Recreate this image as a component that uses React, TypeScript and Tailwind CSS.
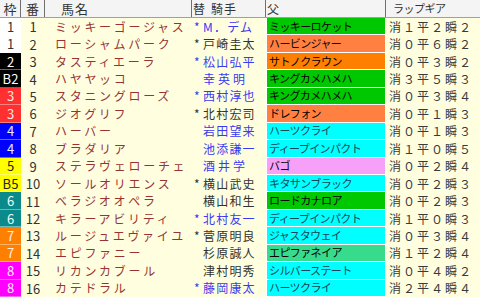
import React from 'react'

const WAKU: Record<string, [string, string]> = {
  '1': ['bg-white', 'text-[#333]'],
  '2': ['bg-black', 'text-white'],
  '3': ['bg-[#ff3030]', 'text-[#ffe8e8]'],
  '4': ['bg-[#0000ff]', 'text-[#e8e8ff]'],
  '5': ['bg-[#ffff00]', 'text-[#222]'],
  '6': ['bg-[#0a8a8a]', 'text-[#e8ffff]'],
  '7': ['bg-[#ff8000]', 'text-[#fff0e0]'],
  '8': ['bg-[#ff00ff]', 'text-[#ffe8ff]'],
}

const GREEN = 'bg-[#00c800]'
const SALMON = 'bg-[#ff8040]'
const ORANGE = 'bg-[#ff8000]'
const CYAN = 'bg-[#00ffff] text-[#0f4656]'
const PINK = 'bg-[#f7a0f7]'
const SEA = 'bg-[#36dc8c]'

const rows: [string, number, string, boolean, string, boolean, string, string, string][] = [
  ['1', 1, 'ミッキーゴージャス', true, 'M．デム', true, 'ミッキーロケット', GREEN, '消１平２瞬２'],
  ['1', 2, 'ローシャムパーク', true, '戸崎圭太', false, 'ハービンジャー', SALMON, '消０平６瞬２'],
  ['2', 3, 'タスティエーラ', true, '松山弘平', true, 'サトノクラウン', ORANGE, '消０平３瞬２'],
  ['B2', 4, 'ハヤヤッコ', false, '幸英明', true, 'キングカメハメハ', GREEN, '消３平５瞬３'],
  ['3', 5, 'スタニングローズ', true, '西村淳也', true, 'キングカメハメハ', GREEN, '消０平３瞬４'],
  ['3', 6, 'ジオグリフ', true, '北村宏司', false, 'ドレフォン', SALMON, '消０平１瞬３'],
  ['4', 7, 'ハーバー', false, '岩田望来', true, 'ハーツクライ', CYAN, '消０平１瞬３'],
  ['4', 8, 'ブラダリア', false, '池添謙一', true, 'ディープインパクト', CYAN, '消１平０瞬５'],
  ['5', 9, 'ステラヴェローチェ', false, '酒井学', true, 'バゴ', PINK, '消０平２瞬４'],
  ['B5', 10, 'ソールオリエンス', true, '横山武史', false, 'キタサンブラック', CYAN, '消０平２瞬３'],
  ['6', 11, 'ベラジオオペラ', false, '横山和生', false, 'ロードカナロア', GREEN, '消０平２瞬３'],
  ['6', 12, 'キラーアビリティ', true, '北村友一', true, 'ディープインパクト', CYAN, '消１平０瞬３'],
  ['7', 13, 'ルージュエヴァイユ', true, '菅原明良', false, 'ジャスタウェイ', CYAN, '消０平３瞬４'],
  ['7', 14, 'エピファニー', false, '杉原誠人', false, 'エピファネイア', SEA, '消１平２瞬４'],
  ['8', 15, 'リカンカブール', false, '津村明秀', false, 'シルバーステート', CYAN, '消０平４瞬２'],
  ['8', 16, 'カテドラル', true, '藤岡康太', true, 'ハーツクライ', CYAN, '消２平４瞬４'],
]

const COLS = 'grid grid-cols-[21px_24px_147px_74px_120px_94px]'

export default function App() {
  return (
    <div className="w-[480px] h-[297px] flex flex-col bg-[#ffffe0] font-['Noto_Sans_CJK_JP',sans-serif] overflow-hidden">
      {/* Header */}
      <div className={`${COLS} h-[18px] shrink-0 bg-[#f4f4f4] border-b border-[#a0a0a0] text-[#333] leading-none`}>
        <div className="flex items-center justify-center text-[13px] border-r border-[#707070]">枠</div>
        <div className="flex items-center justify-center text-[13px] border-r border-[#707070]">番</div>
        <div className="flex items-center pl-[16px] text-[13px] tracking-[1px] border-r border-[#707070]">馬名</div>
        <div className="flex items-center pl-[1px] text-[12px] border-r border-[#707070]">
          <span>替</span>
          <span className="ml-[6px] tracking-[1px]">騎手</span>
        </div>
        <div className="flex items-center pl-[1px] text-[12px] border-r border-[#707070]">父</div>
        <div className="flex items-center pl-[7px] text-[11px] tracking-[-0.5px]">ラップギア</div>
      </div>

      {/* Body */}
      {rows.map(([waku, num, name, mark, jockey, blue, sire, sireBg, lap]) => {
        const w = WAKU[waku.replace('B', '')]
        const jc = blue ? 'text-[#3a3af0]' : 'text-[#333]'
        const wide = jockey.length === 3
        return (
          <div key={num} className={`${COLS} flex-1 min-h-0 leading-none`}>
            <div className={`flex items-center justify-center text-[13px] border-b border-white/40 ${w[0]} ${w[1]}`}>
              {waku}
            </div>
            <div className="flex items-center justify-center text-[13px] text-[#333]">{num}</div>
            <div className="flex items-center pl-[10px] text-[12px] tracking-[2.7px] text-[#993333] whitespace-nowrap">
              {name}
            </div>
            <div className={`flex items-center pl-[2px] text-[12px] whitespace-nowrap ${jc}`}>
              <span className="w-[9px] text-[12px] leading-none">{mark ? '*' : ''}</span>
              <span className={wide ? 'tracking-[3px]' : 'tracking-[1.2px]'}>{jockey}</span>
            </div>
            <div
              className={`flex items-center pl-[2px] text-[11px] tracking-[-0.6px] whitespace-nowrap border-b border-r border-l border-white ${sireBg} ${sireBg === CYAN ? '' : 'text-black'}`}
            >
              {sire}
            </div>
            <div className="flex items-center pl-[3px] text-[12px] tracking-[2px] text-[#3a3a3a] whitespace-nowrap">
              {lap}
            </div>
          </div>
        )
      })}
    </div>
  )
}
